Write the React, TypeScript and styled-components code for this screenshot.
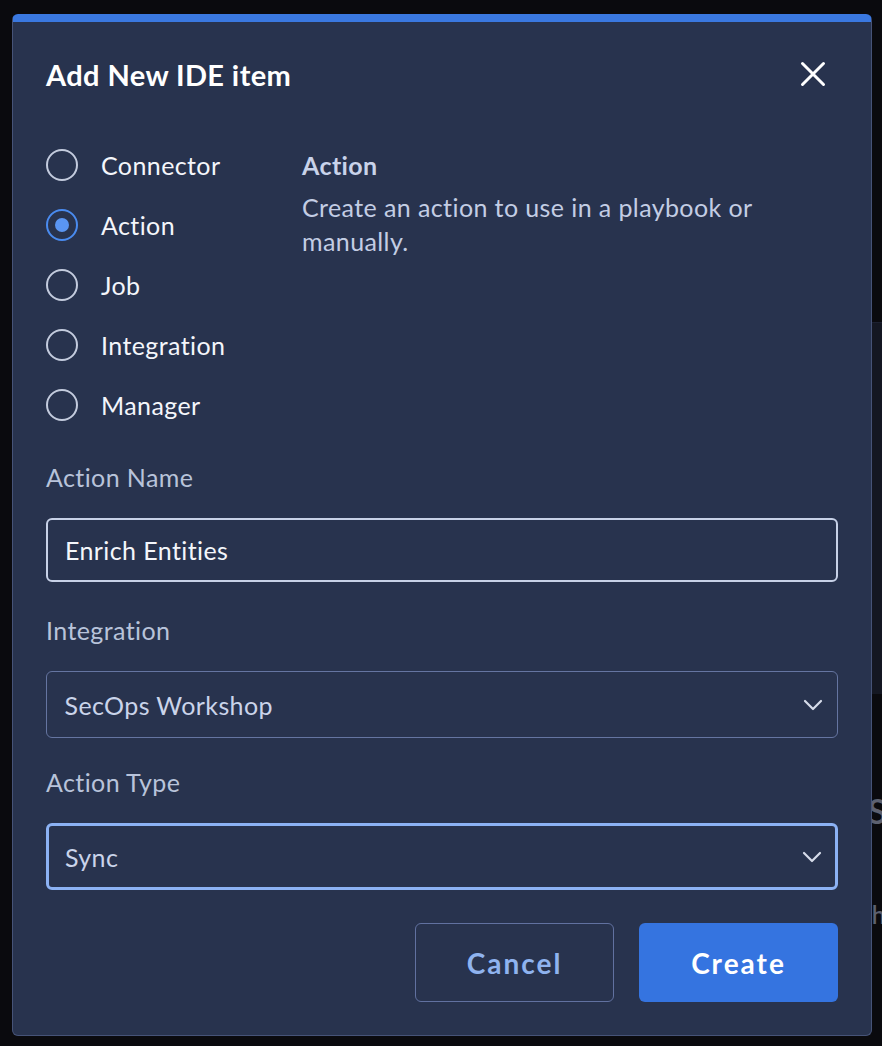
import React, { useState } from "react";
import styled, { createGlobalStyle } from "styled-components";

const Global = createGlobalStyle`
  html, body { margin: 0; padding: 0; background: #0a0a0e; }
  body { font-family: "Lato", "Noto Sans", sans-serif; }
  * { box-sizing: border-box; }
`;

const Page = styled.div`
  position: relative;
  width: 882px;
  height: 1046px;
  overflow: hidden;
  background: #0a0a0e;
`;

const Backdrop = styled.div`
  position: absolute;
  inset: 0;
  z-index: 0;
`;

const BehindPanel = styled.div`
  position: absolute;
  left: 860px;
  top: 322px;
  width: 40px;
  height: 372px;
  background: #141722;
  border-top: 1px solid #1c2030;
`;

const BehindText = styled.span<{ $top: number; $left: number; $size: number }>`
  position: absolute;
  top: ${(p) => p.$top}px;
  left: ${(p) => p.$left}px;
  font-size: ${(p) => p.$size}px;
  color: #5d6170;
  font-weight: 600;
`;

const Modal = styled.div`
  position: relative;
  z-index: 1;
  margin: 14px 0 0 12px;
  width: 860px;
  height: 1022px;
  background: #28334e;
  border: 1px solid #465377;
  border-top: 8px solid #3a78e0;
  border-radius: 6px;
  padding: 0 33px;
  display: flex;
  flex-direction: column;
  font-size: 25px;
  letter-spacing: 0.4px;
`;

const Header = styled.div`
  display: flex;
  align-items: center;
  justify-content: space-between;
  height: 106px;
  padding-bottom: 2px;
`;

const Title = styled.h2`
  margin: 0;
  font-size: 29px;
  font-weight: 700;
  color: #ffffff;
  letter-spacing: 0.4px;
`;

const CloseButton = styled.button`
  background: none;
  border: none;
  padding: 0;
  margin-right: 12px;
  width: 26px;
  height: 26px;
  display: flex;
  align-items: center;
  justify-content: center;
  cursor: pointer;
`;

const TypeSection = styled.div`
  display: grid;
  grid-template-columns: 256px 1fr;
  margin-top: 7px;
`;

const RadioList = styled.div`
  display: flex;
  flex-direction: column;
`;

const RadioRow = styled.label`
  display: flex;
  align-items: center;
  height: 60px;
  gap: 23px;
  cursor: pointer;
`;

const RadioCircle = styled.span<{ $checked: boolean }>`
  width: 32px;
  height: 32px;
  border-radius: 50%;
  border: 2px solid ${(p) => (p.$checked ? "#4a8bef" : "#c3cbdd")};
  display: flex;
  align-items: center;
  justify-content: center;
  flex-shrink: 0;
  &::after {
    content: "";
    width: 14px;
    height: 14px;
    border-radius: 50%;
    background: ${(p) => (p.$checked ? "#5a95f2" : "transparent")};
  }
`;

const RadioLabel = styled.span`
  color: #f4f6fb;
`;

const Description = styled.div`
  padding-top: 13px;
  max-width: 480px;
`;

const DescTitle = styled.div`
  font-weight: 700;
  color: #c9d3ea;
  line-height: 34px;
`;

const DescText = styled.div`
  color: #c3cde4;
  line-height: 34px;
  margin-top: 8px;
`;

const Field = styled.div<{ $top: number }>`
  display: flex;
  flex-direction: column;
  margin-top: ${(p) => p.$top}px;
`;

const FieldLabel = styled.label`
  line-height: 34px;
  color: #b8c3da;
  margin-bottom: 24px;
`;

const TextInput = styled.input`
  height: 64px;
  width: 100%;
  background: transparent;
  border: 2px solid #c7d1e7;
  border-radius: 6px;
  padding: 0 17px;
  font-family: inherit;
  font-size: 25px;
  letter-spacing: 0.4px;
  color: #f4f6fb;
  outline: none;
`;

const SelectBox = styled.div<{ $focused?: boolean }>`
  height: 67px;
  display: flex;
  align-items: center;
  justify-content: space-between;
  border: ${(p) => (p.$focused ? "3px solid #8cb2f4" : "1.5px solid #6575a1")};
  border-radius: 6px;
  padding: 0 ${(p) => (p.$focused ? 13 : 14.5)}px 0 ${(p) => (p.$focused ? 16 : 17.5)}px;
  color: #cad4ea;
`;

const Footer = styled.div`
  display: flex;
  justify-content: flex-end;
  gap: 25px;
  margin-top: 33px;
`;

const Button = styled.button<{ $primary?: boolean }>`
  width: 199px;
  height: 79px;
  border-radius: 6px;
  font-family: inherit;
  font-size: 28px;
  font-weight: 700;
  letter-spacing: 2px;
  cursor: pointer;
  border: ${(p) => (p.$primary ? "none" : "1.5px solid #6171a0")};
  background: ${(p) => (p.$primary ? "#3574e0" : "transparent")};
  color: ${(p) => (p.$primary ? "#ffffff" : "#8fb3ef")};
`;

const Chevron = () => (
  <svg width="20" height="12" viewBox="0 0 20 12" fill="none">
    <path d="M2 2 L10 10 L18 2" stroke="#d6dcea" strokeWidth="2.2" strokeLinecap="round" strokeLinejoin="round" />
  </svg>
);

const CloseIcon = () => (
  <svg width="26" height="26" viewBox="0 0 26 26" fill="none">
    <path d="M2.5 2.5 L23.5 23.5 M23.5 2.5 L2.5 23.5" stroke="#ffffff" strokeWidth="3" strokeLinecap="round" />
  </svg>
);

const types = ["Connector", "Action", "Job", "Integration", "Manager"];

export default function App() {
  const [selected, setSelected] = useState("Action");
  return (
    <>
      <Global />
      <Page>
        <Backdrop>
          <BehindPanel />
          <BehindText $top={790} $left={868} $size={34}>S</BehindText>
          <BehindText $top={900} $left={863} $size={24}>th</BehindText>
        </Backdrop>
        <Modal>
          <Header>
            <Title>Add New IDE item</Title>
            <CloseButton aria-label="Close">
              <CloseIcon />
            </CloseButton>
          </Header>
          <TypeSection>
            <RadioList>
              {types.map((t) => (
                <RadioRow key={t} onClick={() => setSelected(t)}>
                  <RadioCircle $checked={selected === t} />
                  <RadioLabel>{t}</RadioLabel>
                </RadioRow>
              ))}
            </RadioList>
            <Description>
              <DescTitle>Action</DescTitle>
              <DescText>Create an action to use in a playbook or manually.</DescText>
            </Description>
          </TypeSection>
          <Field $top={25}>
            <FieldLabel>Action Name</FieldLabel>
            <TextInput defaultValue="Enrich Entities" />
          </Field>
          <Field $top={31}>
            <FieldLabel>Integration</FieldLabel>
            <SelectBox>
              <span>SecOps Workshop</span>
              <Chevron />
            </SelectBox>
          </Field>
          <Field $top={27}>
            <FieldLabel>Action Type</FieldLabel>
            <SelectBox $focused>
              <span>Sync</span>
              <Chevron />
            </SelectBox>
          </Field>
          <Footer>
            <Button>Cancel</Button>
            <Button $primary>Create</Button>
          </Footer>
        </Modal>
      </Page>
    </>
  );
}
